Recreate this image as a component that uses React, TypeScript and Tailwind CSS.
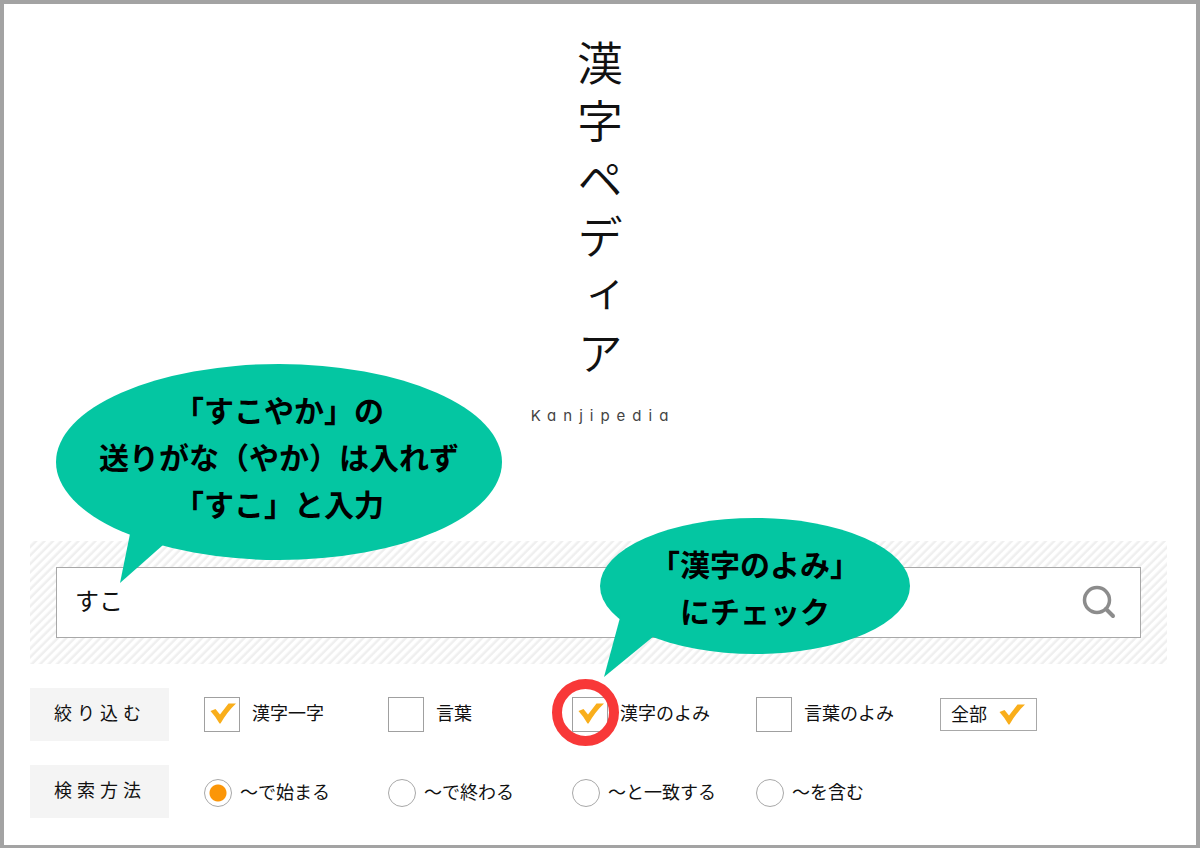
import React from "react";

const filters = [
  { id: "kanji", label: "漢字一字", checked: true },
  { id: "word", label: "言葉", checked: false },
  { id: "kanji-yomi", label: "漢字のよみ", checked: true, marked: true },
  { id: "word-yomi", label: "言葉のよみ", checked: false },
];

const methods = [
  { id: "starts", label: "～で始まる" },
  { id: "ends", label: "～で終わる" },
  { id: "equals", label: "～と一致する" },
  { id: "contains", label: "～を含む" },
];

function CheckMark({ className }: { className: string }) {
  return (
    <svg viewBox="0 0 26 21" width="26" height="21" className={className} aria-hidden="true">
      <path d="M0.5 8L5.5 6L10 11.5L18.5 0.5H26Q17.5 8.5 10.5 20.5H9.5Q5.5 13.5 0.5 8Z" fill="#f9ae1b" />
    </svg>
  );
}

function RowTitle({ children }: { children: React.ReactNode }) {
  return (
    <h2 className="mr-[35px] flex h-[53px] w-[139px] shrink-0 items-center bg-[#f4f4f4] pb-1.5 pl-6 text-lg tracking-[5px]">
      {children}
    </h2>
  );
}

function Logo() {
  return (
    <header className="flex flex-col items-center pt-9">
      <h1 className="h-[352px] whitespace-nowrap font-[350] text-[46px] leading-[60px] tracking-[12px] [writing-mode:vertical-rl]">
        漢字ペディア
      </h1>
      <p className="mt-3 pl-1.5 font-['Inter'] text-[15px] leading-6 tracking-[7px] text-[#444] [font-feature-settings:'cv11']">
        Kanjipedia
      </p>
    </header>
  );
}

export default function App() {
  return (
    <div className="min-h-screen border-4 border-[#a3a3a3] bg-white pb-[27px] font-['Noto_Sans_CJK_JP',sans-serif] text-[#111]">
      <Logo />
      <main className="relative mt-[113px] pl-[26px] pr-[29px]">
        <form onSubmit={(e) => e.preventDefault()}>
          <div className="bg-[repeating-linear-gradient(135deg,#fff_0px,#fff_2px,#efefef_4px,#efefef_5px,#fff_6px)] p-[26px]">
            <div className="flex h-[71px] items-center border border-[#a8a8a8] bg-white">
              <input
                aria-label="検索"
                defaultValue="すこ"
                className="h-full min-w-0 flex-1 bg-transparent pb-1.5 pl-[18px] text-2xl outline-none"
              />
              <button type="submit" aria-label="検索する" className="mr-6 shrink-0 pb-0.5">
                <svg width="34" height="34" viewBox="0 0 34 34" fill="none" stroke="#8c8c8c" strokeWidth="3.5" aria-hidden="true">
                  <circle cx="15" cy="15" r="12.5" />
                  <path d="M24 24L31 31" strokeWidth="4" strokeLinecap="round" />
                </svg>
              </button>
            </div>
          </div>

          <div className="mt-6 flex items-center">
            <RowTitle>絞り込む</RowTitle>
            {filters.map((f) => (
              <div key={f.id} className="flex w-46 shrink-0 items-center">
                <span className="relative flex">
                  <input
                    id={f.id}
                    type="checkbox"
                    defaultChecked={f.checked}
                    className="peer h-[35px] w-9 appearance-none border border-[#a0a0a0] bg-white"
                  />
                  <CheckMark className="pointer-events-none invisible absolute left-1.5 top-1.5 peer-checked:visible" />
                  {f.marked && (
                    <span className="pointer-events-none absolute -left-5 -top-[18px] size-[67px] rounded-full border-10 border-[#f83838]" />
                  )}
                </span>
                <label htmlFor={f.id} className="pb-1.5 pl-3 text-lg">
                  {f.label}
                </label>
              </div>
            ))}
            <button type="button" className="flex h-[33px] w-[97px] shrink-0 items-center gap-3 border border-[#a8a8a8] pl-2.5 text-lg">
              <span className="pb-1">全部</span>
              <CheckMark className="shrink-0" />
            </button>
          </div>

          <div className="mt-6 flex items-center">
            <RowTitle>検索方法</RowTitle>
            {methods.map((m, i) => (
              <div key={m.id} className="flex w-46 shrink-0 items-center pt-0.5">
                <input
                  id={m.id}
                  type="radio"
                  name="method"
                  defaultChecked={i === 0}
                  className="size-7 appearance-none rounded-full border border-[#a8a8a8] bg-white checked:bg-[radial-gradient(circle,#fb9608_8px,#fff_9px)]"
                />
                <label htmlFor={m.id} className="pb-1 pl-2 text-lg">
                  {m.label}
                </label>
              </div>
            ))}
          </div>
        </form>

        <div className="pointer-events-none absolute -top-[177px] left-[52px] w-[446px] text-center text-black">
          <svg width="446" height="220" viewBox="0 0 446 220" className="absolute left-0 top-0" fill="#04c6a2" aria-hidden="true">
            <ellipse cx="223" cy="98" rx="223" ry="98" />
            <path d="M75 165L64 219L107 181Z" />
          </svg>
          <p className="relative pt-[22px] text-3xl font-bold leading-[47px]">
            「すこやか」の
            <br />
            送りがな（やか）は入れず
            <br />
            「すこ」と入力
          </p>
        </div>

        <div className="pointer-events-none absolute -top-[23px] left-[596px] w-[310px] text-center text-black">
          <svg width="310" height="160" viewBox="0 0 310 160" className="absolute left-0 top-0" fill="#04c6a2" aria-hidden="true">
            <ellipse cx="155" cy="68" rx="155" ry="68" />
            <path d="M21 96L4 159L54 118Z" />
          </svg>
          <p className="relative pt-[22px] text-3xl font-bold leading-[47px]">
            「漢字のよみ」
            <br />
            にチェック
          </p>
        </div>
      </main>
    </div>
  );
}
